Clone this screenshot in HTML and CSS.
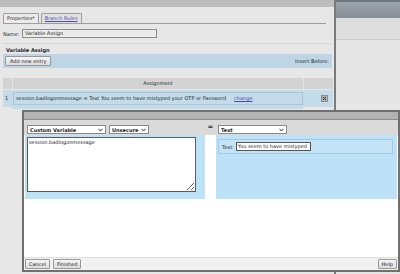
FILE: index.html
```html
<!DOCTYPE html>
<html lang="en">
<head>
    <meta charset="UTF-8">
    <meta name="viewport" content="width=device-width, initial-scale=1.0">
    <title>Variable Assign</title>
    <link rel="stylesheet" href="styles.css">
</head>
<body>
    <div class="screen">
        <!-- Panneau des propriétés -->
        <div class="panel">
            <div class="panel-top"></div>
            <div class="panel-body">
                <div class="tabs">
                    <span class="tab active">Properties*</span>
                    <span class="tab"><a href="#">Branch Rules</a></span>
                </div>
                <div class="name-row">
                    <label class="name-label">Name:</label>
                    <span class="name-input">Variable Assign</span>
                </div>
                <div class="section-title">Variable Assign</div>
                <div class="action-bar">
                    <button class="btn">Add new entry</button>
                    <span class="insert-label">Insert Before:</span>
                </div>
                <div class="entries">
                    <div class="head-cell"></div>
                    <div class="head-cell">Assignment</div>
                    <div class="head-cell"></div>

                    <div class="row-cell cell-num">1</div>
                    <div class="row-cell cell-assign">
                        <div class="assign-box">
                            <span>session.badlogonmessage = Text You seem to have mistyped your OTP or Password</span>
                            <a href="#" class="change-link">change</a>
                        </div>
                    </div>
                    <div class="row-cell cell-remove">
                        <svg class="remove-icon" width="7" height="7" viewBox="0 0 7 7">
                            <rect x="0.5" y="0.5" width="6" height="6" fill="#b4b4b4" stroke="#8e8e8e"/>
                            <path d="M2 2 L5 5 M5 2 L2 5" stroke="#333" stroke-width="1"/>
                        </svg>
                    </div>
                </div>
            </div>
        </div>

        <div class="side">
            <div class="side-top"></div>
            <div class="side-band"></div>
        </div>

        <!-- Fenêtre de modification -->
        <div class="dialog">
            <div class="dialog-title"></div>
            <div class="dialog-toolbar">
                <div class="col-left">
                    <span class="select select-var">Custom Variable
                        <svg width="5" height="4" viewBox="0 0 5 4"><path d="M0.5 0.8 L2.5 3 L4.5 0.8" fill="none" stroke="#333"/></svg>
                    </span>
                    <span class="select select-secure">Unsecure
                        <svg width="5" height="4" viewBox="0 0 5 4"><path d="M0.5 0.8 L2.5 3 L4.5 0.8" fill="none" stroke="#333"/></svg>
                    </span>
                </div>
                <div class="col-mid">=</div>
                <div class="col-right">
                    <span class="select select-type">Text
                        <svg width="5" height="4" viewBox="0 0 5 4"><path d="M0.5 0.8 L2.5 3 L4.5 0.8" fill="none" stroke="#333"/></svg>
                    </span>
                </div>
            </div>
            <div class="dialog-fields">
                <div class="field-left">
                    <textarea class="value-text">session.badlogonmessage</textarea>
                </div>
                <div class="field-gap"></div>
                <div class="field-right">
                    <div class="text-field">
                        <span>Text:</span>
                        <span class="text-input">You seem to have mistyped</span>
                    </div>
                </div>
            </div>
            <div class="dialog-space"></div>
            <div class="dialog-footer">
                <button class="btn">Cancel</button>
                <button class="btn">Finished</button>
                <button class="btn help-btn">Help</button>
            </div>
        </div>
    </div>
</body>
</html>
```

FILE: styles.css
```css
/* Page de base */
body {
    margin: 0;
    background-color: #e6e6e6;
    font-family: "DejaVu Sans", Verdana, sans-serif;
    font-size: 5px;
    color: #262626;
}

a {
    color: #4c4cb0;
}

.screen {
    position: relative;
    display: flex;
    width: 400px;
    height: 274px;
    overflow: hidden;
}

/* Panneau principal */
.panel {
    width: 334px;
    border-right: 2px solid #7a7a7a;
    background-color: #e7e7e7;
}

.panel-top {
    height: 7px;
    background-color: #bdbdbd;
}

.panel-body {
    padding: 0 2px 0 3px;
}

/* Onglets */
.tabs {
    display: flex;
    align-items: flex-end;
    gap: 2px;
    height: 10px;
    margin: 6px 6px 0 0;
    border-bottom: 1px solid #9d9d9d;
}

.tab {
    height: 9px;
    line-height: 9px;
    padding: 0 3px;
    border: 1px solid #9d9d9d;
    border-bottom: none;
    border-radius: 2px 2px 0 0;
    background-color: #e2e2e2;
}

.tab.active {
    background-color: #ececec;
}

/* Ligne du nom */
.name-row {
    display: flex;
    align-items: center;
    height: 9px;
    margin-top: 5px;
}

.name-label {
    width: 19px;
}

.name-input {
    box-sizing: border-box;
    width: 135px;
    height: 9px;
    line-height: 7px;
    padding: 0 2px;
    border: 1px solid #8d8d8d;
    background-color: #ebebeb;
}

.section-title {
    height: 8px;
    line-height: 8px;
    margin: 5px 1px 0 0;
    padding: 2px 3px 0;
    border-top: 1px solid #d3d3d3;
    font-weight: bold;
}

.action-bar {
    display: flex;
    align-items: center;
    justify-content: space-between;
    height: 14px;
    padding: 0 3px 0 2px;
    background-color: #bed5e5;
}

/* Boutons */
.btn {
    height: 10px;
    padding: 0 4px;
    line-height: 8px;
    font-family: inherit;
    font-size: 5px;
    color: #222;
    border: 1px solid #999;
    border-radius: 1px;
    background: linear-gradient(#f6f6f6, #dcdcdc);
}

/* Tableau des affectations */
.entries {
    display: grid;
    grid-template-columns: 9px 1fr 30px;
    row-gap: 1px;
    margin: 10px -1px 0 0;
}

.head-cell {
    height: 11px;
    line-height: 11px;
    text-align: center;
    background-color: #d3d3d3;
}

.head-cell + .head-cell {
    border-left: 1px solid #e4e4e4;
}

.row-cell {
    height: 17px;
    background-color: #c4dbe9;
}

.cell-num {
    line-height: 17px;
    padding-left: 2px;
}

.cell-assign {
    padding: 2px 0 0 1px;
}

.assign-box {
    display: flex;
    height: 11px;
    line-height: 11px;
    padding: 0 2px;
    border: 1px solid #a9c5d8;
}

.change-link {
    margin-left: 8px;
}

.cell-remove {
    display: flex;
    align-items: center;
    justify-content: flex-end;
    padding-right: 5px;
}

/* Zone de droite */
.side {
    flex: 1;
}

.side-top {
    height: 16px;
    border-top: 2px solid #6f767d;
    background: linear-gradient(#9ca4ac, #858d95);
}

.side-band {
    height: 21px;
    background-color: #dedede;
    border-bottom: 1px solid #cacaca;
}

/* Fenêtre */
.dialog {
    position: absolute;
    left: 22px;
    top: 110px;
    box-sizing: border-box;
    width: 378px;
    height: 162px;
    display: flex;
    flex-direction: column;
    border: 2px solid #707070;
    background-color: #fff;
}

.dialog-title {
    height: 7px;
    background-color: #b3b3b3;
    border-bottom: 1px solid #8c8c8c;
}

.dialog-toolbar {
    display: flex;
    align-items: flex-end;
    box-sizing: border-box;
    height: 15px;
    padding: 0 1px 1px;
    background-color: #dadada;
}

.col-left {
    display: flex;
    gap: 3px;
    width: 180px;
    box-sizing: border-box;
    padding-left: 2px;
}

.col-mid {
    width: 11px;
    align-self: center;
    text-align: center;
    font-size: 7px;
    font-weight: bold;
}

.col-right {
    flex: 1;
    padding-left: 2px;
}

.select {
    display: flex;
    align-items: center;
    justify-content: space-between;
    box-sizing: border-box;
    height: 9px;
    padding: 0 2px;
    border: 1px solid #8a8a8a;
    background-color: #fff;
    font-weight: bold;
}

.select-var {
    width: 79px;
}

.select-secure {
    width: 40px;
}

.select-type {
    width: 69px;
}

.dialog-fields {
    display: flex;
    height: 64px;
    padding: 0 1px;
}

.field-left {
    width: 180px;
    padding: 2px 0 0 2px;
    box-sizing: border-box;
    background-color: #bde1f6;
}

.field-gap {
    width: 11px;
}

.field-right {
    flex: 1;
    padding: 4px 4px 0 2px;
    background-color: #bde1f6;
}

.value-text {
    box-sizing: border-box;
    width: 169px;
    height: 55px;
    margin: 0;
    padding: 1px;
    border: 1px solid #5a5a5a;
    font-family: inherit;
    font-size: 5px;
    color: #222;
    overflow: scroll;
    resize: both;
}

.value-text::-webkit-scrollbar {
    width: 7px;
    height: 8px;
    background-color: #f6f6f6;
}

.value-text::-webkit-scrollbar-track {
    background-color: #f6f6f6;
}

.value-text::-webkit-scrollbar-corner {
    background-color: #f6f6f6;
}

.text-field {
    display: flex;
    align-items: center;
    gap: 2px;
    height: 13px;
    padding-left: 3px;
    border: 1px solid #a3cbe4;
    background-color: #c3e4f7;
}

.text-input {
    box-sizing: border-box;
    width: 75px;
    height: 9px;
    line-height: 7px;
    padding: 0 1px;
    border: 1px solid #555;
    background-color: #fff;
}

.dialog-space {
    flex: 1;
}

.dialog-footer {
    display: flex;
    align-items: center;
    gap: 3px;
    height: 12px;
    padding: 0 1px;
    border-top: 1px solid #dedede;
    background-color: #f1f1f1;
}

.dialog-footer .btn {
    padding: 0 3px;
}

.help-btn {
    margin-left: auto;
}
```
